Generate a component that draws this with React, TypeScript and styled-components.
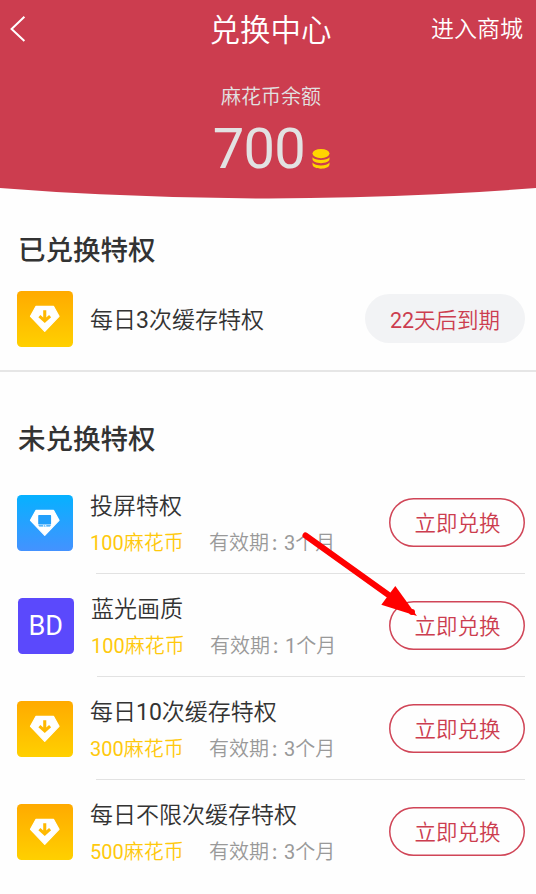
import React from "react";
import styled, { createGlobalStyle } from "styled-components";

const GlobalStyle = createGlobalStyle`
  * { box-sizing: border-box; }
  body {
    margin: 0;
    background: #fefefe;
    font-family: Roboto, "Noto Sans CJK SC", sans-serif;
    font-weight: 350;
    color: #333;
  }
`;

const Page = styled.div`
  position: relative;
  width: 536px;
  height: 894px;
  overflow: hidden;
  background: #fefefe;
`;

const Header = styled.header`
  height: 199px;
  background: #cc3d4f;
  clip-path: circle(3425px at 50% -3226.5px);
`;

const NavBar = styled.nav`
  display: grid;
  grid-template-columns: 1fr auto 1fr;
  align-items: center;
  height: 58px;
  padding: 0 13px 0 9px;
  color: #fff;
`;

const BackIcon = styled.svg`
  display: block;
  margin-top: -3px;
`;

const PageTitle = styled.h1`
  margin: 0;
  padding: 2px 0 0 9px;
  font-size: 30.5px;
  line-height: 58px;
  font-weight: 350;
`;

const MallLink = styled.a`
  justify-self: end;
  font-size: 23px;
  line-height: 58px;
`;

const Balance = styled.div`
  display: flex;
  flex-direction: column;
  align-items: center;
  padding-top: 24px;
  color: #e2e2e2;
`;

const BalanceLabel = styled.div`
  font-size: 20px;
  line-height: 30px;
  padding-left: 6px;
`;

const BalanceValue = styled.div`
  display: flex;
  align-items: flex-end;
  gap: 7px;
  padding-left: 7px;
`;

const Amount = styled.span`
  font-size: 56px;
  font-weight: 400;
  line-height: 66px;
  height: 66px;
  margin-top: 4px;
  letter-spacing: -0.7px;
`;

const CoinIcon = styled.svg`
  display: block;
  margin-bottom: 12px;
`;

const SectionTitle = styled.h2<{ $top: number }>`
  margin: 0;
  padding: ${(p) => p.$top}px 0 0 18px;
  font-size: 27.5px;
  line-height: 40px;
  font-weight: 500;
`;

const Owned = styled.section`
  height: 173px;
  border-bottom: 2px solid #e6e6e6;
`;

const OwnedRow = styled.div`
  display: flex;
  align-items: center;
  padding: 20px 11px 0 17px;
`;

const Row = styled.div<{ $shift?: boolean }>`
  display: flex;
  align-items: flex-start;
  height: 103px;
  padding: 0 11px 0 ${(p) => (p.$shift ? 18 : 17)}px;
`;

const List = styled.div`
  padding-top: 35px;
`;

const Tile = styled.div<{ $bg: string }>`
  flex: none;
  display: flex;
  align-items: center;
  justify-content: center;
  width: 55.5px;
  height: 55.5px;
  border-radius: 4.5px;
  background: ${(p) => p.$bg};
  color: #fff;
  font-size: 27px;
  font-weight: 400;
`;

const Body = styled.div`
  flex: 1;
  height: 79px;
  margin-left: 17.5px;
`;

const Name = styled.div`
  font-size: 23px;
  line-height: 34px;
  white-space: nowrap;
`;

const OwnedName = styled(Name)`
  flex: 1;
  margin-left: 17.5px;
  padding-top: 5px;
`;

const RowName = styled(Name)`
  margin-top: -5px;
`;

const Digits = styled.span`
  font-weight: 400;
`;

const Meta = styled.div`
  display: flex;
  margin-top: 4px;
  font-size: 20px;
  line-height: 30px;
  white-space: nowrap;
`;

const Price = styled.span`
  width: 119px;
  color: #ffc90c;
`;

const Term = styled.span`
  color: #999;
`;

const Colon = styled.span`
  display: inline-block;
  width: 15px;
  padding-left: 3px;
  font-weight: 500;
`;

const RowMain = styled.div<{ $line: boolean }>`
  display: flex;
  flex: 1;
  height: 79px;
  background: ${(p) => (p.$line ? "linear-gradient(#e2e2e2, #e2e2e2)" : "none")};
  background-repeat: no-repeat;
  background-size: calc(100% - 22.7px) 1.5px;
  background-position: 100% 100%;
`;

const pillText = `
  flex: none;
  height: 49px;
  border-radius: 25px;
  font-family: inherit;
  font-weight: 350;
  font-size: 21.5px;
  text-align: center;
  color: #cc3d4f;
`;

const Expiry = styled.div`
  ${pillText}
  width: 160px;
  padding-top: 1px;
  line-height: 52px;
  background: #f2f3f5;
`;

const Redeem = styled.button`
  ${pillText}
  width: 136px;
  margin-top: 3px;
  padding: 3px 0 0 1px;
  line-height: 46px;
  border: 0;
  box-shadow: inset 0 0 0 1.5px #d04557;
  background: transparent;
`;

const Pointer = styled.svg`
  position: absolute;
  left: 296px;
  top: 526px;
`;

const GOLD = "linear-gradient(#ffaa00, #ffd000)";
const BLUE = "linear-gradient(#06b1ff, #4492ff)";
const VIOLET = "#5b49fc";

type Kind = "download" | "cast" | "bd";

function Gem({ kind }: { kind: Kind }) {
  return (
    <svg width="56" height="56" viewBox="0 0 56 56">
      <path
        d="M19.2 15.2H36.8L42.4 25.3L28 40.4L13.6 25.3Z"
        fill="#fff"
        stroke="#fff"
        strokeWidth="1.2"
        strokeLinejoin="round"
      />
      {kind === "download" ? (
        <path d="M28 19.2V30M22.6 25.2L28 30L33.4 25.2" fill="none" stroke="#ffb900" strokeWidth="3.1" />
      ) : (
        <g fill="#229ffb">
          <rect x="21.4" y="20" width="13" height="9.4" rx="0.6" />
          <path d="M21.4 30.3H26.5V31.6H22.6ZM29.5 30.3H34.4L33.2 31.6H29.5Z" />
          <path d="M28 30.1L29.1 31.6H26.9Z" />
        </g>
      )}
    </svg>
  );
}

function Icon({ kind }: { kind: Kind }) {
  const bg = kind === "download" ? GOLD : kind === "cast" ? BLUE : VIOLET;
  return <Tile $bg={bg}>{kind === "bd" ? "BD" : <Gem kind={kind} />}</Tile>;
}

const perks: { kind: Kind; name: React.ReactNode; price: number; months: number }[] = [
  { kind: "cast", name: "投屏特权", price: 100, months: 3 },
  { kind: "bd", name: "蓝光画质", price: 100, months: 1 },
  { kind: "download", name: <>每日<Digits>10</Digits>次缓存特权</>, price: 300, months: 3 },
  { kind: "download", name: "每日不限次缓存特权", price: 500, months: 3 },
];

export default function App() {
  return (
    <Page>
      <GlobalStyle />
      <Header>
        <NavBar>
          <BackIcon width="18" height="28" viewBox="0 0 18 28">
            <path d="M15.4 1.8L2.6 14L15.4 26" fill="none" stroke="#fff" strokeWidth="2" />
          </BackIcon>
          <PageTitle>兑换中心</PageTitle>
          <MallLink>进入商城</MallLink>
        </NavBar>
        <Balance>
          <BalanceLabel>麻花币余额</BalanceLabel>
          <BalanceValue>
            <Amount>700</Amount>
            <CoinIcon width="18" height="22" viewBox="0 0 18 22" fill="#ffd500">
              <ellipse cx="9" cy="5.6" rx="8.5" ry="4.6" />
              <path d="M.5 9.3C3 13 15 13 17.5 9.3V11C17.5 16.5.5 16.5.5 11Z" />
              <path d="M.5 14.6C3 18.4 15 18.4 17.5 14.6V16.3C17.5 22.2.5 22.2.5 16.3Z" />
            </CoinIcon>
          </BalanceValue>
        </Balance>
      </Header>
      <Owned>
        <SectionTitle $top={32}>已兑换特权</SectionTitle>
        <OwnedRow>
          <Icon kind="download" />
          <OwnedName>
            每日<Digits>3</Digits>次缓存特权
          </OwnedName>
          <Expiry>
            <Digits>22</Digits>天后到期
          </Expiry>
        </OwnedRow>
      </Owned>
      <section>
        <SectionTitle $top={48}>未兑换特权</SectionTitle>
        <List>
          {perks.map((perk, i) => (
            <Row key={i} $shift={perk.kind === "bd"}>
              <Icon kind={perk.kind} />
              <RowMain $line={i < perks.length - 1}>
                <Body>
                  <RowName>{perk.name}</RowName>
                  <Meta>
                    <Price>
                      <Digits>{perk.price}</Digits>麻花币
                    </Price>
                    <Term>
                      有效期<Colon>:</Colon>
                      <Digits>{perk.months}</Digits>个月
                    </Term>
                  </Meta>
                </Body>
                <Redeem>立即兑换</Redeem>
              </RowMain>
            </Row>
          ))}
        </List>
      </section>
      <Pointer width="126" height="96" viewBox="296 526 126 96">
        <path d="M305.5 535.5L390 596" stroke="#f00" strokeWidth="6" strokeLinecap="round" />
        <path d="M395.3 586L381.3 604.7L417 616Z" fill="#f00" />
        <circle cx="412" cy="612" r="3" fill="#f00" />
      </Pointer>
    </Page>
  );
}
